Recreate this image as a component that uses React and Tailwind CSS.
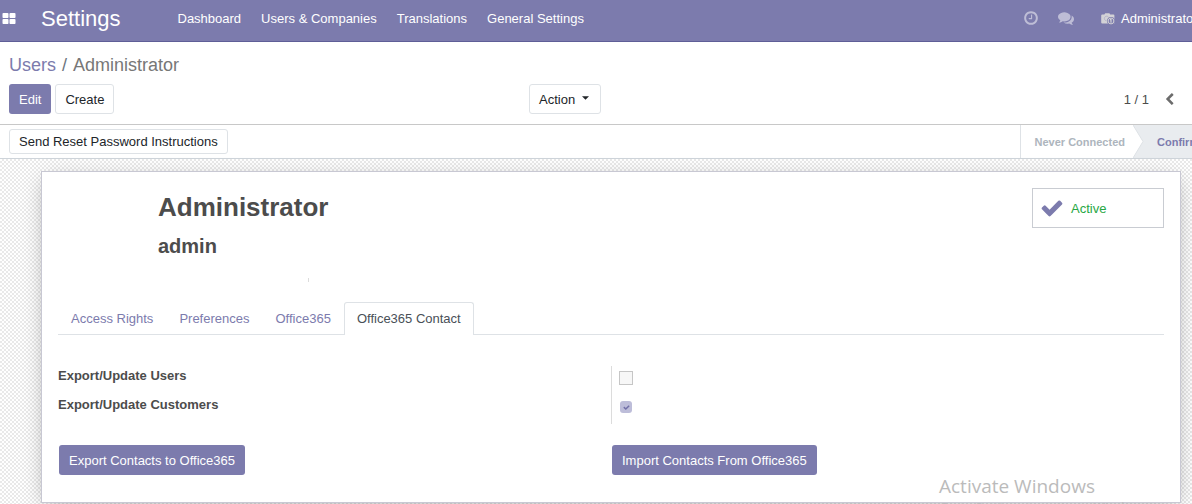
import React from "react";

const paths = {
  grid: "M832 1024v384q0 52-38 90t-90 38h-512q-52 0-90-38t-38-90v-384q0-52 38-90t90-38h512q52 0 90 38t38 90zm0-768v384q0 52-38 90t-90 38h-512q-52 0-90-38t-38-90v-384q0-52 38-90t90-38h512q52 0 90 38t38 90zm896 768v384q0 52-38 90t-90 38h-512q-52 0-90-38t-38-90v-384q0-52 38-90t90-38h512q52 0 90 38t38 90zm0-768v384q0 52-38 90t-90 38h-512q-52 0-90-38t-38-90v-384q0-52 38-90t90-38h512q52 0 90 38t38 90z",
  clock: "M1024 544v448q0 14-9 23t-23 9h-320q-14 0-23-9t-9-23v-64q0-14 9-23t23-9h224v-352q0-14 9-23t23-9h64q14 0 23 9t9 23zm416 352q0-148-73-273t-198-198-273-73-273 73-198 198-73 273 73 273 198 198 273 73 273-73 198-198 73-273zm224 0q0 209-103 385.5t-279.5 279.5-385.5 103-385.5-103-279.5-279.5-103-385.5 103-385.5 279.5-279.5 385.5-103 385.5 103 279.5 279.5 103 385.5z",
  comments: "M1408 768q0 139-94 257t-256.5 186.5-353.5 68.5q-86 0-176-16-124 88-278 128-36 9-86 16h-3q-11 0-20.5-8t-11.5-21q-1-3-1-6.5t.5-6.5 2-6l2.5-5 3.5-5.5 4-5 4.5-5 4-4.5q5-6 23-25t26-29.5 22.5-29 25-38.5 20.5-44q-124-72-195-177t-71-224q0-139 94-257t256.5-186.5 353.5-68.5 353.5 68.5 256.5 186.5 94 257zm384 256q0 120-71 224.5t-195 176.5q10 24 20.5 44t25 38.5 22.5 29 26 29.5 23 25q1 1 4 4.5t4.5 5 4 5 3.5 5.5l2.5 5 2 6 .5 6.5-1 6.5q-3 14-13 22t-22 7q-50-7-86-16-154-40-278-128-90 16-176 16-271 0-472-132 58 4 88 4 161 0 309-45t264-129q125-92 192-212t67-254q0-77-23-152 129 71 204 178t75 230z",
  check: "M1671 566q0 40-28 68l-724 724-136 136q-28 28-68 28t-68-28l-136-136-362-362q-28-28-28-68t28-68l136-136q28-28 68-28t68 28l294 295 656-657q28-28 68-28t68 28l136 136q28 28 28 68z",
  left: "M1427 301l-531 531 531 531q19 19 19 45t-19 45l-166 166q-19 19-45 19t-45-19l-742-742q-19-19-19-45t19-45l742-742q19-19 45-19t45 19l166 166q19 19 19 45t-19 45z",
};

function Icon({ name, className }) {
  return (
    <svg viewBox="0 0 1792 1792" fill="currentColor" aria-hidden="true" className={className}>
      <path d={paths[name]} />
    </svg>
  );
}

function CameraIcon() {
  return (
    <svg viewBox="0 0 14 12" aria-hidden="true" className="h-3 w-3.5 shrink-0">
      <path fill="#d3d2d6" d="M1.2 1.500h2.2l.8-1.300h4.2l.8 1.300h3.200q1 0 1 1v7.900H1.200q-1 0-1-1V2.500q0-1 1-1z" />
      <path fill="none" stroke="#a9a8c4" strokeWidth=".7" d="M5.600 7.800a2.300 2.300 0 1 1 2-3.600" />
      <circle cx="10" cy="8" r="3.900" fill="#7c7bad" />
      <circle cx="10" cy="8" r="2.900" fill="none" stroke="#d3d2d6" strokeWidth="1" />
      <path fill="none" stroke="#d3d2d6" strokeWidth="1.200" d="M9 6.700h1v3" />
    </svg>
  );
}

const menus = ["Dashboard", "Users & Companies", "Translations", "General Settings"];
const tabs = ["Access Rights", "Preferences", "Office365", "Office365 Contact"];
const plainButton = "rounded-[3px] border border-[#dee2e6] bg-white text-[#212529] whitespace-nowrap";
const primaryButton = "h-[30px] rounded-[3px] bg-[#7c7bad] px-2.5 pt-0.5 text-white whitespace-nowrap";

function Navbar() {
  return (
    <header className="flex h-[42px] items-center border-b border-[#5f5e97] bg-[#7c7bad] pb-1 text-white">
      <button aria-label="Apps" className="flex w-[41px] pl-0.5"><Icon name="grid" className="h-[14px] w-[14px]" /></button>
      <a href="#settings" className="text-[22px] leading-7">Settings</a>
      <nav className="ml-[57px] flex gap-5 whitespace-nowrap">
        {menus.map((m) => <a key={m} href="#menu">{m}</a>)}
      </nav>
      <div className="ml-auto flex items-center">
        <button aria-label="Activities" className="pb-0.5 text-white/50"><Icon name="clock" className="h-4 w-4" /></button>
        <button aria-label="Messages" className="ml-[19px] pb-0.5 text-white/50"><Icon name="comments" className="h-4 w-4" /></button>
        <button className="ml-[27px] flex w-[91px] items-center gap-[6px] overflow-hidden whitespace-nowrap">
          <CameraIcon />Administrator
        </button>
      </div>
    </header>
  );
}

function ControlPanel() {
  return (
    <section className="border-b border-[#c8c8c8] px-[9px] pt-[10px] pb-[10px]">
      <nav className="flex h-[26px] gap-[6px] text-lg leading-[26px] text-[#6c757d]">
        <a href="#users" className="text-[#7c7bad]">Users</a>
        <span>/</span>
        <span className="text-[#777]">Administrator</span>
      </nav>
      <div className="mt-1.5 flex items-center">
        <div className="flex w-[520px] gap-1">
          <button className={primaryButton}>Edit</button>
          <button className={`${plainButton} h-[30px] px-[9px] pt-0.5`}>Create</button>
        </div>
        <button className={`${plainButton} flex h-[30px] items-center gap-[7px] pt-0.5 pr-[11px] pl-[9px]`}>
          Action
          <svg viewBox="0 0 8 4" fill="currentColor" aria-hidden="true" className="mb-1 h-1 w-[7px]"><path d="M0 0h8L4 4z" /></svg>
        </button>
        <div className="ml-auto flex items-center gap-3.5 pr-[7px] text-[#4c4c4c]">
          <span className="pt-0.5">1 / 1</span>
          <button aria-label="Previous" className="text-[#6c6c6c]"><Icon name="left" className="h-[13px] w-[13px]" /></button>
        </div>
      </div>
    </section>
  );
}

function StatusBar() {
  return (
    <section className="flex h-[34px] items-center border-b border-[#ced4da] pl-[9px]">
      <button className={`${plainButton} h-[25px] px-[9px]`}>Send Reset Password Instructions</button>
      <div className="ml-auto flex h-full items-center border-l border-[#dee2e6] text-[11px] font-bold whitespace-nowrap">
        <span className="pr-2 pl-[14px] text-[#adb5bd]">Never Connected</span>
        <span className="flex h-full w-[59px] items-center overflow-hidden bg-[#e9ecef] text-[#7c7bad]">
          <svg viewBox="0 0 11 33" aria-hidden="true" className="mr-[13px] h-full w-[11px] shrink-0">
            <path d="M0 0L10 16.500L0 33z" fill="#fff" />
            <path d="M0 0L10 16.500L0 33" fill="none" stroke="#dee2e6" />
          </svg>
          Confirmed
        </span>
      </div>
    </section>
  );
}

function CheckBox({ id, checked }) {
  if (!checked) {
    return <input id={id} type="checkbox" disabled className="h-3.5 w-3.5 appearance-none border border-[#c6c6c6] bg-[#f7f7f7]" />;
  }
  return (
    <span className="ml-px grid h-3 w-3 place-items-center">
      <input id={id} type="checkbox" disabled defaultChecked className="col-start-1 row-start-1 h-3 w-3 appearance-none rounded-[3px] bg-[#bdbdd9]" />
      <Icon name="check" className="col-start-1 row-start-1 h-[7px] w-[7px] text-[#7270a8]" />
    </span>
  );
}

const options = [
  { id: "export-users", label: "Export/Update Users", checked: false },
  { id: "export-customers", label: "Export/Update Customers", checked: true },
];

export default function App() {
  return (
    <div className="relative flex h-screen flex-col overflow-hidden bg-white font-['Liberation_Sans',Arial,sans-serif] text-[13px] leading-5 text-[#4c4c4c]">
      <Navbar />
      <ControlPanel />
      <StatusBar />
      <div className="flex-1 bg-[repeating-conic-gradient(#e9e9e9_0_25%,#fff_0_50%)] bg-[length:4px_4px] pt-3 pr-[11px] pl-[41px]">
        <main className="border border-[#c8c8d3] bg-white px-4 pt-4 pb-[27px] shadow-[0_5px_20px_-5px_rgba(0,0,0,0.35)]">
          <div className="flex items-start justify-between">
            <div className="pl-[100px]">
              <h1 className="pt-1 text-[26px] leading-[30px] font-bold">Administrator</h1>
              <h2 className="mt-3 text-[20px] leading-6 font-bold">admin</h2>
              <div className="mt-5 ml-[150px] h-1 w-px bg-[#dcdcdc]" />
            </div>
            <button className="flex h-10 w-[132px] items-center gap-[7px] border border-[#c9ccd2] pl-[7px] text-[#28a745]">
              <Icon name="check" className="h-6 w-6 text-[#7c7bad]" />
              <span className="pt-0.5">Active</span>
            </button>
          </div>
          <div role="tablist" className="mt-5 flex border-b border-[#dee2e6]">
            {tabs.map((t, i) => (
              <button
                key={t}
                role="tab"
                aria-selected={i === 3}
                className={
                  i === 3
                    ? "-mb-px h-[33px] rounded-t-[3px] border border-b-0 border-[#dee2e6] bg-white px-3 text-[#495057]"
                    : "h-8 px-[13px] pt-0.5 text-[#7c7bad]"
                }
              >
                {t}
              </button>
            ))}
          </div>
          <div className="mt-[31px]">
            {options.map((o) => (
              <div key={o.id} className="grid h-[29px] grid-cols-2">
                <label htmlFor={o.id} className="font-bold">{o.label}</label>
                <div className="flex items-center border-l border-[#dcdcdc] pb-[5px] pl-[7px]">
                  <CheckBox id={o.id} checked={o.checked} />
                </div>
              </div>
            ))}
          </div>
          <div className="mt-[21px] grid grid-cols-2">
            <div className="pl-px"><button className={primaryButton}>Export Contacts to Office365</button></div>
            <div className="pl-px"><button className={primaryButton}>Import Contacts From Office365</button></div>
          </div>
        </main>
      </div>
      <div className="pointer-events-none absolute top-[473px] left-[939px] font-['Open_Sans','Noto_Sans',sans-serif] whitespace-nowrap text-[#bbb]">
        <p className="text-[19px] leading-[26px]">Activate Windows</p>
        <p className="text-[13px] leading-4">Go to Settings to activate Windows.</p>
      </div>
    </div>
  );
}
